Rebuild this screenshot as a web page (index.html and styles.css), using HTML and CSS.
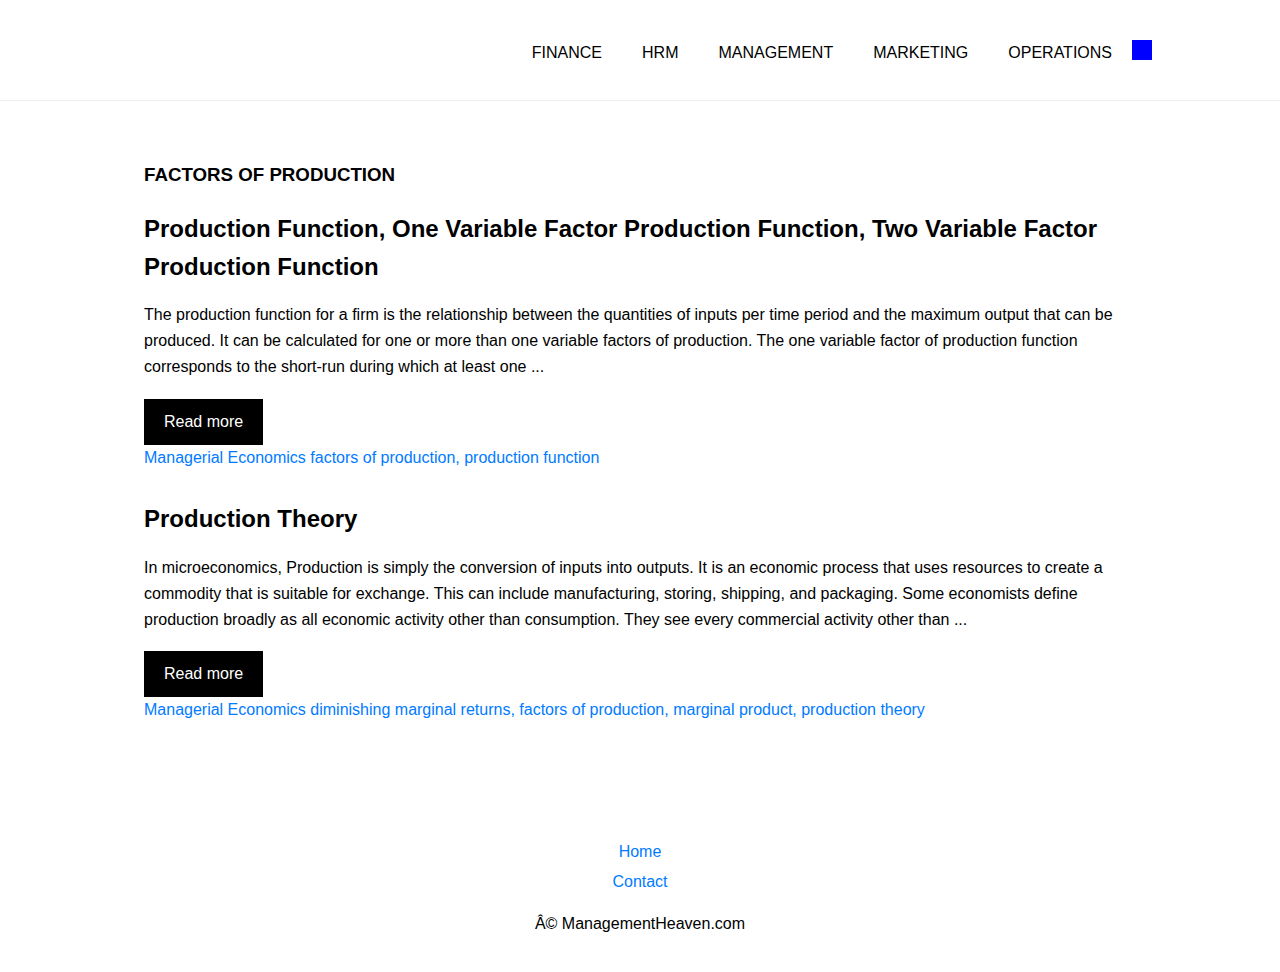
FILE: index.html
```html
<!DOCTYPE html>
<html lang="en">
<head>
<meta charset="utf-8">
<title>Factors of Production</title>
<link rel="stylesheet" href="styles.css">
</head>
<body>
<header class="site-header">
  <div class="header-inner">
    <nav class="main-nav">
      <a href="#">FINANCE</a>
      <a href="#">HRM</a>
      <a href="#">MANAGEMENT</a>
      <a href="#">MARKETING</a>
      <a href="#">OPERATIONS</a>
    </nav>
    <span class="search-box"></span>
  </div>
</header>
<main class="content">
  <h1 class="archive-title">FACTORS OF PRODUCTION</h1>
  <article class="post">
    <h2 class="post-title">Production Function, One Variable Factor Production Function, Two Variable Factor Production Function</h2>
    <p class="excerpt">The production function for a firm is the relationship between the quantities of inputs per time period and the maximum output that can be produced. It can be calculated for one or more than one variable factors of production. The one variable factor of production function corresponds to the short-run during which at least one ...</p>
    <a class="read-more" href="#">Read more</a>
    <div class="meta"><a href="#">Managerial Economics</a> <a href="#">factors of production</a>, <a href="#">production function</a></div>
  </article>
  <article class="post">
    <h2 class="post-title">Production Theory</h2>
    <p class="excerpt excerpt-second">In microeconomics, Production is simply the conversion of inputs into outputs. It is an economic process that uses resources to create a commodity that is suitable for exchange. This can include manufacturing, storing, shipping, and packaging. Some economists define production broadly as all economic activity other than consumption. They see every commercial activity other than ...</p>
    <a class="read-more" href="#">Read more</a>
    <div class="meta"><a href="#">Managerial Economics</a> <a href="#">diminishing marginal returns</a>, <a href="#">factors of production</a>, <a href="#">marginal product</a>, <a href="#">production theory</a></div>
  </article>
</main>
<footer class="site-footer">
  <ul class="footer-links">
    <li><a href="#">Home</a></li>
    <li><a href="#">Contact</a></li>
  </ul>
  <p class="copyright">Â© ManagementHeaven.com</p>
</footer>
</body>
</html>
```

FILE: styles.css
```css
* { box-sizing: border-box; }
html, body { margin: 0; padding: 0; }
body {
  font-family: "Liberation Sans", Arial, sans-serif;
  font-size: 16px;
  color: #000;
  background: #fff;
}
a { text-decoration: none; }

.site-header {
  height: 101px;
  border-bottom: 1px solid #eee;
}
.header-inner {
  width: 1024px;
  margin: 0 auto;
  display: flex;
  justify-content: flex-end;
  align-items: flex-start;
  padding-top: 40px;
}
.main-nav {
  display: flex;
  padding-top: 1px;
}
.main-nav a {
  color: #000;
  font-size: 16px;
  line-height: 24px;
  padding: 0 20px;
}
.search-box {
  display: block;
  width: 20px;
  height: 20px;
  background: #00f;
}

.content {
  width: 992px;
  margin: 0 auto;
  padding-top: 60px;
}
.archive-title {
  font-size: 18.72px;
  line-height: 27px;
  font-weight: bold;
  margin: 0 0 22px;
}
.post { margin-bottom: 30px; }
.post-title {
  font-size: 24px;
  line-height: 38px;
  font-weight: bold;
  margin: 0 0 16px;
}
.excerpt {
  font-size: 16px;
  line-height: 26px;
  margin: 0 0 19px;
}
.excerpt-second {
  margin-top: 17px;
  margin-bottom: 18px;
}
.read-more {
  display: inline-block;
  background: #000;
  color: #fff;
  font-size: 16px;
  line-height: 22px;
  padding: 12px 20px;
  vertical-align: top;
}
.meta {
  line-height: 25px;
  color: #007bff;
}
.meta a { color: #007bff; }

.site-footer {
  text-align: center;
  padding-top: 85px;
  padding-bottom: 30px;
}
.footer-links {
  list-style: none;
  margin: 0;
  padding: 0;
}
.footer-links li { line-height: 30px; }
.footer-links a { color: #007bff; }
.copyright {
  margin: 15px 0 0;
  line-height: 24px;
}
```
